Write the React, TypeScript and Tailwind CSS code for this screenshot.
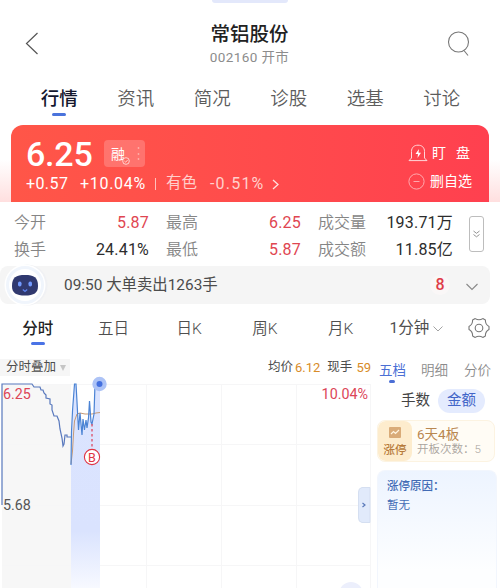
import clsx from "clsx";

const mainTabs = ["行情", "资讯", "简况", "诊股", "选基", "讨论"];

const stats = [
  { label: "今开", value: "5.87", up: true },
  { label: "最高", value: "6.25", up: true },
  { label: "成交量", value: "193.71万", up: false },
  { label: "换手", value: "24.41%", up: false },
  { label: "最低", value: "5.87", up: true },
  { label: "成交额", value: "11.85亿", up: false },
];

const periods = ["分时", "五日", "日K", "周K", "月K"];

function Header() {
  return (
    <header className="flex h-[78px] shrink-0 justify-between pl-[25px] pr-[30px]">
      <svg className="mt-[31px] h-6 w-[14px]" viewBox="0 0 14 24" fill="none" stroke="#555" strokeWidth="1.2">
        <path d="M12.5 2L1.5 12.5L12.5 23" />
      </svg>
      <div className="ml-[13px] flex w-[120px] flex-col items-center">
        {/* pull-down handle */}
        <div className="h-[3px] w-[76px] shrink-0 rounded-b-lg bg-[#e3e8fb]" />
        <h1 className="mt-[20px] text-[19.5px] leading-6 font-medium whitespace-nowrap text-[#222]">常铝股份</h1>
        <p className="mt-px text-[13.5px] leading-[18px] tracking-[0.4px] whitespace-nowrap text-[#8c8c8c]">002160 开市</p>
      </div>
      <svg className="mt-[31px] h-[26px] w-[23px]" viewBox="0 0 23 26" fill="none" stroke="#777" strokeWidth="1.1">
        <circle cx="11.5" cy="11" r="10" />
        <path d="M17 19.5L21 24.5" />
      </svg>
    </header>
  );
}

function MainTabs() {
  return (
    <nav className="flex h-[47px] shrink-0 pt-[9px] pl-[21px]">
      {mainTabs.map((tab, i) => (
        <div key={tab} className="flex w-[76.5px] flex-col items-center">
          <span
            className={clsx(
              "text-[18.5px] leading-[25px]",
              i === 0 ? "font-medium text-[#14182e]" : "font-[350] text-[#5c5c5c]",
            )}
          >
            {tab}
          </span>
          {i === 0 && <span className="mt-px h-[3px] w-[14px] rounded-full bg-[#4a73dc]" />}
        </div>
      ))}
    </nav>
  );
}

function PriceCard() {
  return (
    <section className="flex h-[77px] shrink-0 bg-linear-to-b from-white from-45% to-[#ffdfdf] px-[11px]">
      <div className="flex flex-1 justify-between rounded-t-xl bg-linear-to-r from-[#ff5648] to-[#ff404f] pl-[15px] text-white">
        <div className="flex flex-col">
          <div className="flex h-[48px] items-center pt-[9px]">
            <span className="w-[78px] text-[34px] leading-[38px] font-medium tracking-[-0.2px]">6.25</span>
            <div className="flex h-[27px] w-[41px] items-center rounded bg-white/20 pl-[7px]">
              <span className="text-sm leading-5">融</span>
              <svg className="mt-[14px] -ml-[3px] h-2 w-2" viewBox="0 0 8 8" fill="#ff6960" stroke="white" strokeWidth="0.7">
                <circle cx="4" cy="4" r="3.3" />
                <path d="M2.4 4L3.7 5.2L5.7 2.9" />
              </svg>
              <svg className="ml-[7px] h-[15px] w-[3px]" viewBox="0 0 3 15" fill="#ffb0a9">
                <circle cx="1.5" cy="2" r="0.9" />
                <circle cx="1.5" cy="8" r="0.9" />
                <circle cx="1.5" cy="13" r="0.9" />
              </svg>
            </div>
          </div>
          <div className="flex h-[22px] items-center text-base whitespace-nowrap">
            <span className="w-[54px] tracking-[0.4px]">+0.57</span>
            <span className="w-[75px] tracking-[0.7px]">+10.04%</span>
            <span className="h-3 w-px bg-[#ffc0bc]" />
            <span className="ml-[10px] w-[44px] text-[15.5px] text-[#ffd0cc]">有色</span>
            <span className="w-[58px] tracking-[1.2px] text-[#ffd0cc]">-0.51%</span>
            <svg className="ml-1 h-[11px] w-[7px]" viewBox="0 0 7 11" fill="none" stroke="#ffe0dd" strokeWidth="1.3">
              <path d="M1 1L6 5.5L1 10" />
            </svg>
          </div>
        </div>
        <div className="mr-[17px] flex w-[64px] flex-col pt-[14px]">
          <div className="flex h-7 items-center">
            <svg className="h-[18px] w-5 shrink-0" viewBox="0 0 20 18" fill="none" stroke="#ffd7d9" strokeWidth="1">
              <path d="M3.5 14V7.5C3.5 3.5 6 1.2 10 1.2S16.5 3.5 16.5 7.5V14L19 16.6H1L3.5 14Z" />
              <path d="M11 5L7.5 10H10L9.5 14L13 8.8H10.5Z" fill="white" stroke="none" />
            </svg>
            <span className="ml-1 flex w-[38px] shrink-0 justify-between text-sm">
              <span>盯</span>
              <span>盘</span>
            </span>
          </div>
          <div className="flex h-7 items-center text-sm whitespace-nowrap">
            <svg className="h-[17px] w-[17px] shrink-0" viewBox="0 0 17 17" fill="none" stroke="#ffb3b8" strokeWidth="0.9">
              <circle cx="8.5" cy="8.5" r="7.6" />
              <path d="M5.5 8.5H11.5" />
            </svg>
            <span className="ml-[5px]">删自选</span>
          </div>
        </div>
      </div>
    </section>
  );
}

function Stats() {
  return (
    <section className="flex h-16 shrink-0 items-start pt-[7px] pl-[15px]">
      <dl className="grid w-[438px] grid-cols-[134px_134px_134px] gap-x-[18px] text-base">
        {stats.map(({ label, value, up }) => (
          <div key={label} className="flex h-[27px] items-center justify-between whitespace-nowrap">
            <dt className="-ml-px font-[350] text-[#858585]">{label}</dt>
            <dd className={clsx("tracking-[0.2px]", up ? "text-[#df4651]" : "text-[#2c2c2c]")}>{value}</dd>
          </div>
        ))}
      </dl>
      <div className="mt-[7px] ml-4 flex h-9 w-[15px] items-center justify-center rounded-[3px] border border-[#bdbdbd]">
        <svg className="h-2 w-[7px]" viewBox="0 0 7 8" fill="none" stroke="#888" strokeWidth="0.9">
          <path d="M0.5 1L3.5 3.3L6.5 1M0.5 4.5L3.5 6.8L6.5 4.5" />
        </svg>
      </div>
    </section>
  );
}

function AlertBar() {
  return (
    <section className="mr-[10px] flex h-[38px] shrink-0 items-center rounded-lg bg-[#f5f5f5] text-[#4c4c4c]">
      <svg className="h-[42px] w-[50px] shrink-0" viewBox="0 0 50 42">
        <circle cx="27" cy="21" r="20.5" fill="#f0f1f4" />
        <circle cx="25" cy="21" r="20.5" fill="white" />
        <circle cx="25" cy="21" r="17.5" fill="white" stroke="#f0f5fc" strokeWidth="3" />
        <path d="M12 22C12 13.5 16 11 25 11S38 13.5 38 22C38 29 34 31.5 25 31.5S12 29 12 22Z" fill="#30396f" />
        <rect x="18" y="17.5" width="3.5" height="5" rx="1.7" fill="#729aff" />
        <rect x="28.5" y="17.5" width="3.5" height="5" rx="1.7" fill="#729aff" />
        <path d="M22.8 25.5L25 27.5L27.2 25.5" fill="none" stroke="#5e83ed" strokeWidth="1.2" />
      </svg>
      <span className="mt-[2px] ml-[14px] flex-1 text-[15.4px] whitespace-nowrap">09:50 大单卖出1263手</span>
      <span className="flex h-5 w-5 items-center justify-center rounded-full bg-[#faf7f7] font-medium text-[#df3d49]">8</span>
      <svg className="mt-1 mr-3 ml-4 h-2 w-3" viewBox="0 0 12 8" fill="none" stroke="#888" strokeWidth="1.1">
        <path d="M0.5 1L6 6.5L11.5 1" />
      </svg>
    </section>
  );
}

function PeriodTabs() {
  return (
    <nav className="flex h-[54px] shrink-0 pt-[13px] text-[15.5px] text-[#4f4f4f]">
      {periods.map((period, i) => (
        <div key={period} className="flex w-[75.7px] flex-col items-center">
          <span className={clsx("leading-6", i === 0 ? "font-medium text-[#222]" : "font-[350]")}>{period}</span>
          {i === 0 && <span className="mt-px h-[3px] w-[14px] rounded-full bg-[#4a73e6]" />}
        </div>
      ))}
      <div className="ml-[11px] flex h-6 w-[80px] items-center whitespace-nowrap">
        1分钟
        <svg className="ml-[4px] h-[6px] w-[10px]" viewBox="0 0 10 6" fill="none" stroke="#999" strokeWidth="0.9">
          <path d="M0.5 0.5L5 5L9.5 0.5" />
        </svg>
      </div>
      <svg className="-ml-px h-[22px] w-[22px]" viewBox="0 0 22 22" fill="none" stroke="#777" strokeWidth="1.1" strokeLinejoin="round">
        <path d="M7.2 1.6Q11 4 14.8 1.6L17.4 3.1Q17.2 7.3 21 9.4V12.6Q17.2 14.7 17.4 18.9L14.8 20.4Q11 18 7.2 20.4L4.6 18.9Q4.8 14.7 1 12.6V9.4Q4.8 7.3 4.6 3.1Z" />
        <circle cx="11" cy="11" r="3.8" />
      </svg>
    </nav>
  );
}

function Chart() {
  return (
    <div className="flex w-[371px] flex-col">
      <div className="flex h-[18px] items-center pt-px text-[12.5px] whitespace-nowrap text-[#4c4c4c]">
        <div className="flex h-[17px] w-[70px] items-center bg-[#f6f6f6] pl-[6px]">
          分时叠加
          <span className="ml-1 h-0 w-0 border-x-[3.5px] border-t-[6px] border-x-transparent border-t-[#c5c5c5]" />
        </div>
        <span className="ml-auto">均价</span>
        <span className="ml-[2px] text-[13px] text-[#d88c29]">6.12</span>
        <span className="ml-[7px]">现手</span>
        <span className="ml-1 text-[13px] text-[#d88c29]">59</span>
      </div>
      {/* y origin keeps the 6.25 limit line at 384 */}
      <svg className="h-[212px] w-[371px]" viewBox="0 376 371 212" fill="none">
        <defs>
          <linearGradient id="session" x1="0" y1="384" x2="0" y2="588" gradientUnits="userSpaceOnUse">
            <stop offset="0" stopColor="#dbe4ff" />
            <stop offset="0.72" stopColor="#dae3fe" />
            <stop offset="1" stopColor="#f7f9ff" />
          </linearGradient>
        </defs>
        <path d="M2 384H71V588H2Z" fill="#f7f7f7" />
        <path d="M2 384.5H371M2 444.5H371M2 505.5H371M2 565.5H371M146.5 384V588M221.5 384V588M296.5 384V588M370.5 384V588" stroke="#f6f6f7" />
        <path d="M71 464L72.5 420L74.5 384H76L77.5 414L79 430L80 413L82 434L83 419L85 431L87 423L89 412L90 401L91 417L92 424L94 414L95 384H100V588H71Z" fill="url(#session)" />
        <path d="M2 505V384H32L34 387H40L41 390L43 390L44 393L46 395V398L50 399V404L52 405V410L54 416H57L59 421L60 429L62 438L63 446L64 444L65 435H67V437H71" stroke="#5878bd" strokeWidth="1.2" />
        <path d="M71 464L72.5 451L73.5 434L74.5 421L77 414L80 413L85 414H92L96 413L100 412.5" stroke="#c69a76" />
        <path d="M71 465L71.5 432L72.5 411L74.5 384H76L77 402L78.5 430L80 413L82 435L83 419L84.5 430L86 420L87 428L88.5 418L89.5 401L91 422L92 424L94 414L95 384H98" stroke="#4b83d4" strokeWidth="1.2" />
        <path d="M92 424V448" stroke="#dc4057" strokeWidth="1.2" strokeDasharray="2.5 2.5" />
        <circle cx="92" cy="457" r="7.6" fill="white" stroke="#df3444" strokeWidth="1.1" />
        <text x="92" y="461.5" textAnchor="middle" fontSize="12.5" fill="#df3444">B</text>
        <circle cx="99.5" cy="384" r="7.2" fill="#adc3f6" />
        <circle cx="99.5" cy="384" r="3" fill="#4470df" />
        <text x="3" y="399" fontSize="14.3" fill="#dc4658">6.25</text>
        <text x="368" y="399" fontSize="14.3" fill="#dc4658" textAnchor="end">10.04%</text>
        <text x="3" y="510" fontSize="14.3" fill="#555">5.68</text>
        <path d="M370 487.5H362Q358.5 488 358.5 492V518Q358.5 522 362 522.5H370Z" fill="#e1eafb" stroke="#d5dff1" />
        <path d="M362.5 503L365 505L362.5 507" stroke="#5a79ba" strokeWidth="1.2" />
        <circle cx="351" cy="594" r="12" fill="#eceffc" />
      </svg>
    </div>
  );
}

function SidePanel() {
  return (
    <aside className="flex flex-1 flex-col pl-[6px]">
      <div className="flex h-[25px] items-start pt-[2px] text-[13.5px] leading-5 font-[350] text-[#8b8b8b]">
        <div className="flex w-[43px] flex-col items-start pl-[2px]">
          <span className="font-normal text-[#4b6fd5]">五档</span>
          <span className="ml-[10px] h-[3px] w-[6px] rounded-full bg-[#4b6fd5]" />
        </div>
        <span className="ml-[1px] w-[43px]">明细</span>
        <span className="whitespace-nowrap">分价</span>
      </div>
      <div className="mt-[6px] flex h-6 items-center text-[14.5px]">
        <span className="ml-6 w-[37px] text-[#444]">手数</span>
        <span className="flex h-6 w-[47px] items-center justify-center rounded-full bg-[#e4ebfe] text-[#4265c8]">金额</span>
      </div>
      <div className="mt-[7px] flex h-[42px] w-[118px] overflow-hidden rounded-lg border border-[#fcf3e1] bg-[#fffcf5]">
        <div className="flex w-[34px] flex-col items-center rounded-lg bg-[#fdeccd] pt-[6px] text-[#b77b3b]">
          <svg className="h-[11px] w-3" viewBox="0 0 12 11" fill="none">
            <rect width="12" height="11" rx="1" fill="#d9ab78" />
            <path d="M2 7L4.5 4.5L6.5 6.5L10 3" stroke="#fff4df" strokeWidth="1.2" />
          </svg>
          <span className="mt-1 text-[11.5px] leading-4 font-medium whitespace-nowrap">涨停</span>
        </div>
        <div className="pt-[5px] pl-[5px] whitespace-nowrap">
          <p className="text-[13.5px] leading-4 text-[#b98750]">6天4板</p>
          <p className="text-[11.5px] leading-[15px] font-[350] text-[#a9a39d]">开板次数：5</p>
        </div>
      </div>
      <div className="mt-2 w-[120px] flex-1 rounded-t-lg border-x border-t border-[#f2f6fd] bg-linear-to-b from-[#edf4ff] to-[#fdfeff] to-85% pt-[6px] pl-[9px] text-[11.5px] leading-[19px] text-[#426bb5]">
        <p className="font-medium">涨停原因：</p>
        <p>暂无</p>
      </div>
    </aside>
  );
}

export default function App() {
  return (
    <div className="flex h-[588px] w-[500px] flex-col overflow-hidden bg-white font-[Roboto,'Noto_Sans_CJK_SC',sans-serif]">
      <Header />
      <MainTabs />
      <PriceCard />
      <Stats />
      <AlertBar />
      <PeriodTabs />
      <main className="flex min-h-0 flex-1">
        <Chart />
        <SidePanel />
      </main>
    </div>
  );
}
